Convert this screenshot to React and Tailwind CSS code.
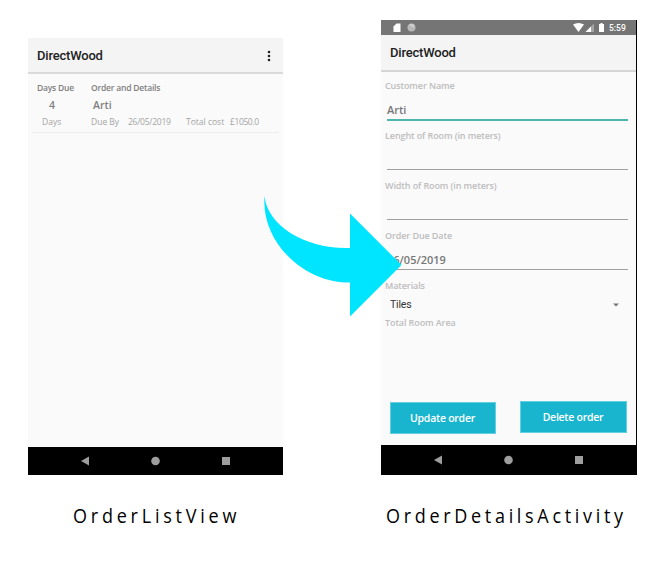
const sans = "font-['Open_Sans','Noto_Sans',sans-serif]";
const roboto = "font-[Roboto,sans-serif]";

function NavBar({ className }) {
  return (
    <div className={`flex items-center bg-black ${className}`}>
      <svg className="block h-[10px] w-[150px]" viewBox="0 0 150 10" fill="#9e9e9e">
        <path d="M0 5L8 .5V9.500Z" />
        <circle cx="74.500" cy="5" r="4.300" />
        <rect x="141" y="1" width="8" height="8" />
      </svg>
    </div>
  );
}

function Label({ className, children }) {
  return (
    <div className={`h-[14px] pl-[4px] text-[9px] leading-[14px] font-semibold tracking-[-0.1px] text-[#bdbdbd] ${className}`}>
      {children}
    </div>
  );
}

function Field({ className, children }) {
  return (
    <div className={`ml-[6px] w-[241px] text-[11px] leading-[16px] font-semibold text-[#777] ${className}`}>
      {children}
    </div>
  );
}

function Caption({ className, children }) {
  return (
    <div className={`mt-[27px] h-[28px] w-[260px] origin-left scale-x-[0.9] font-['Open_Sans','Noto_Sans',sans-serif] text-[20px] leading-[28px] whitespace-nowrap text-black ${className}`}>
      {children}
    </div>
  );
}

function OrderList() {
  return (
    <div className="flex h-[437px] w-[255px] flex-col bg-[#fafafa] whitespace-nowrap">
      <div className="flex h-[36px] items-center justify-between border-b-2 border-[#dadada] bg-[#f4f4f4] pt-px pr-[12px] pl-[9px]">
        <span className={`${roboto} text-[13px] font-medium tracking-[-0.2px] text-[#222]`}>DirectWood</span>
        <svg className="h-[14px] w-[4px]" viewBox="0 0 4 14" fill="#222">
          <circle cx="2" cy="3" r="1.300" />
          <circle cx="2" cy="7" r="1.300" />
          <circle cx="2" cy="11" r="1.300" />
        </svg>
      </div>
      <div className="mx-[4px] flex h-[59px] flex-col border-b border-[#eeeeee] pt-[7px] pl-[5px]">
        <div className="flex h-[15px] text-[8.5px] leading-[14px] font-semibold tracking-[-0.2px] text-[#808080]">
          <span className="w-[54px]">Days Due</span>
          <span>Order and Details</span>
        </div>
        <div className="flex h-[18px] text-[10.5px] leading-[18px] font-semibold text-[#808080]">
          <span className="w-[56px] pl-[12px]">4</span>
          <span>Arti</span>
        </div>
        <div className="flex h-[17px] text-[8.5px] leading-[16px] text-[#a4a4a4]">
          <span className="w-[54px] pl-[5px]">Days</span>
          <span className="w-[37px]">Due By</span>
          <span className="w-[58px] tracking-[-0.25px]">26/05/2019</span>
          <span className="w-[44px]">Total cost</span>
          <span className="tracking-[-0.4px]">£1050.0</span>
        </div>
      </div>
      <NavBar className="mt-auto h-[28px] pl-[53px]" />
    </div>
  );
}

function OrderDetails() {
  return (
    <div className="flex h-[455px] w-[256px] flex-col border-r border-black bg-[#fafafa] whitespace-nowrap">
      <div className="flex h-[15px] items-center bg-[#757575]">
        <svg className="h-[15px] w-[226px]" viewBox="0 0 226 15" fill="#fff">
          <path d="M15.500 3.500H19.500V12H12.500V6.500Z" />
          <circle cx="30.500" cy="7.500" r="4" fill="#b8b8b8" />
          <path d="M28.500 5Q30 3 32.500 4.500L33.500 8L30 6Z" fill="#d0d0d0" />
          <path d="M192 4.500Q197.500 1.500 203 4.500L197.500 12Z" />
          <path d="M213 3.500V12H204.500Z" fill="#a5a5a5" />
          <path d="M210 6.500V12H204.500Z" />
          <path d="M218 4H219.500V3H221.500V4H223V12H218Z" />
        </svg>
        <span className={`${roboto} pt-px pl-[2px] text-[8.5px] font-medium text-white`}>5:59</span>
      </div>
      <div className={`${roboto} flex h-[37px] items-center border-b-2 border-[#d5d5d5] bg-[#f4f4f4] pt-px pl-[9px] text-[13px] font-medium tracking-[-0.2px] text-[#222]`}>
        DirectWood
      </div>
      <Label className="mt-[7px]">Customer Name</Label>
      <Field className="h-[28px] border-b-2 border-[#4db6ac] pt-[9px]">Arti</Field>
      <Label className="mt-[8px]">Lenght of Room (in meters)</Label>
      <Field className="h-[27px] border-b border-[#a0a0a0]" />
      <Label className="mt-[9px]">Width of Room (in meters)</Label>
      <Field className="h-[27px] border-b border-[#a0a0a0]" />
      <Label className="mt-[9px]">Order Due Date</Label>
      <Field className="h-[27px] border-b border-[#a0a0a0] pt-[9px]">26/05/2019</Field>
      <Label className="mt-[9px]">Materials</Label>
      <div className={`${roboto} flex h-[23px] items-center justify-between pr-[17px] pl-[9px] text-[10.5px] tracking-[-0.2px] text-[#333]`}>
        <span>Tiles</span>
        <svg className="h-[4px] w-[6px]" viewBox="0 0 6 4" fill="#777">
          <path d="M0 .5H6L3 3.500Z" />
        </svg>
      </div>
      <Label>Total Room Area</Label>
      <div className="mt-[71px] flex items-start gap-[24px] pl-[8.5px] text-[10.5px] font-semibold tracking-[-0.25px] text-white">
        <div className="mt-px flex h-[32px] w-[106px] items-center justify-center border border-[#62d0e0] bg-[#19b5ce] pt-[2px]">Update order</div>
        <div className="flex h-[32px] w-[107px] items-center justify-center border border-[#62d0e0] bg-[#19b5ce] pt-[2px]">Delete order</div>
      </div>
      <NavBar className="mt-auto h-[30px] pl-[53px]" />
    </div>
  );
}

export default function App() {
  return (
    <div className={`${sans} relative flex h-[567px] w-[664px] items-start overflow-hidden bg-white`}>
      <div className="flex w-[381px] shrink-0 flex-col pt-[38px] pl-[28px]">
        <OrderList />
        <Caption className="ml-[45px] tracking-[4.2px]">OrderListView</Caption>
      </div>
      <div className="flex shrink-0 flex-col pt-[20px]">
        <OrderDetails />
        <Caption className="ml-[5px] tracking-[4.1px]">OrderDetailsActivity</Caption>
      </div>
      <svg className="absolute top-[196px] left-[264px] h-[121px] w-[138px]" viewBox="0 0 138 121" fill="#00e5ff">
        <path d="M.5 0C3 29 40 52 82 52H86V17.500L137.500 69L86 120.500V86.500H82C38 85-3 45 .5 0Z" />
      </svg>
    </div>
  );
}
